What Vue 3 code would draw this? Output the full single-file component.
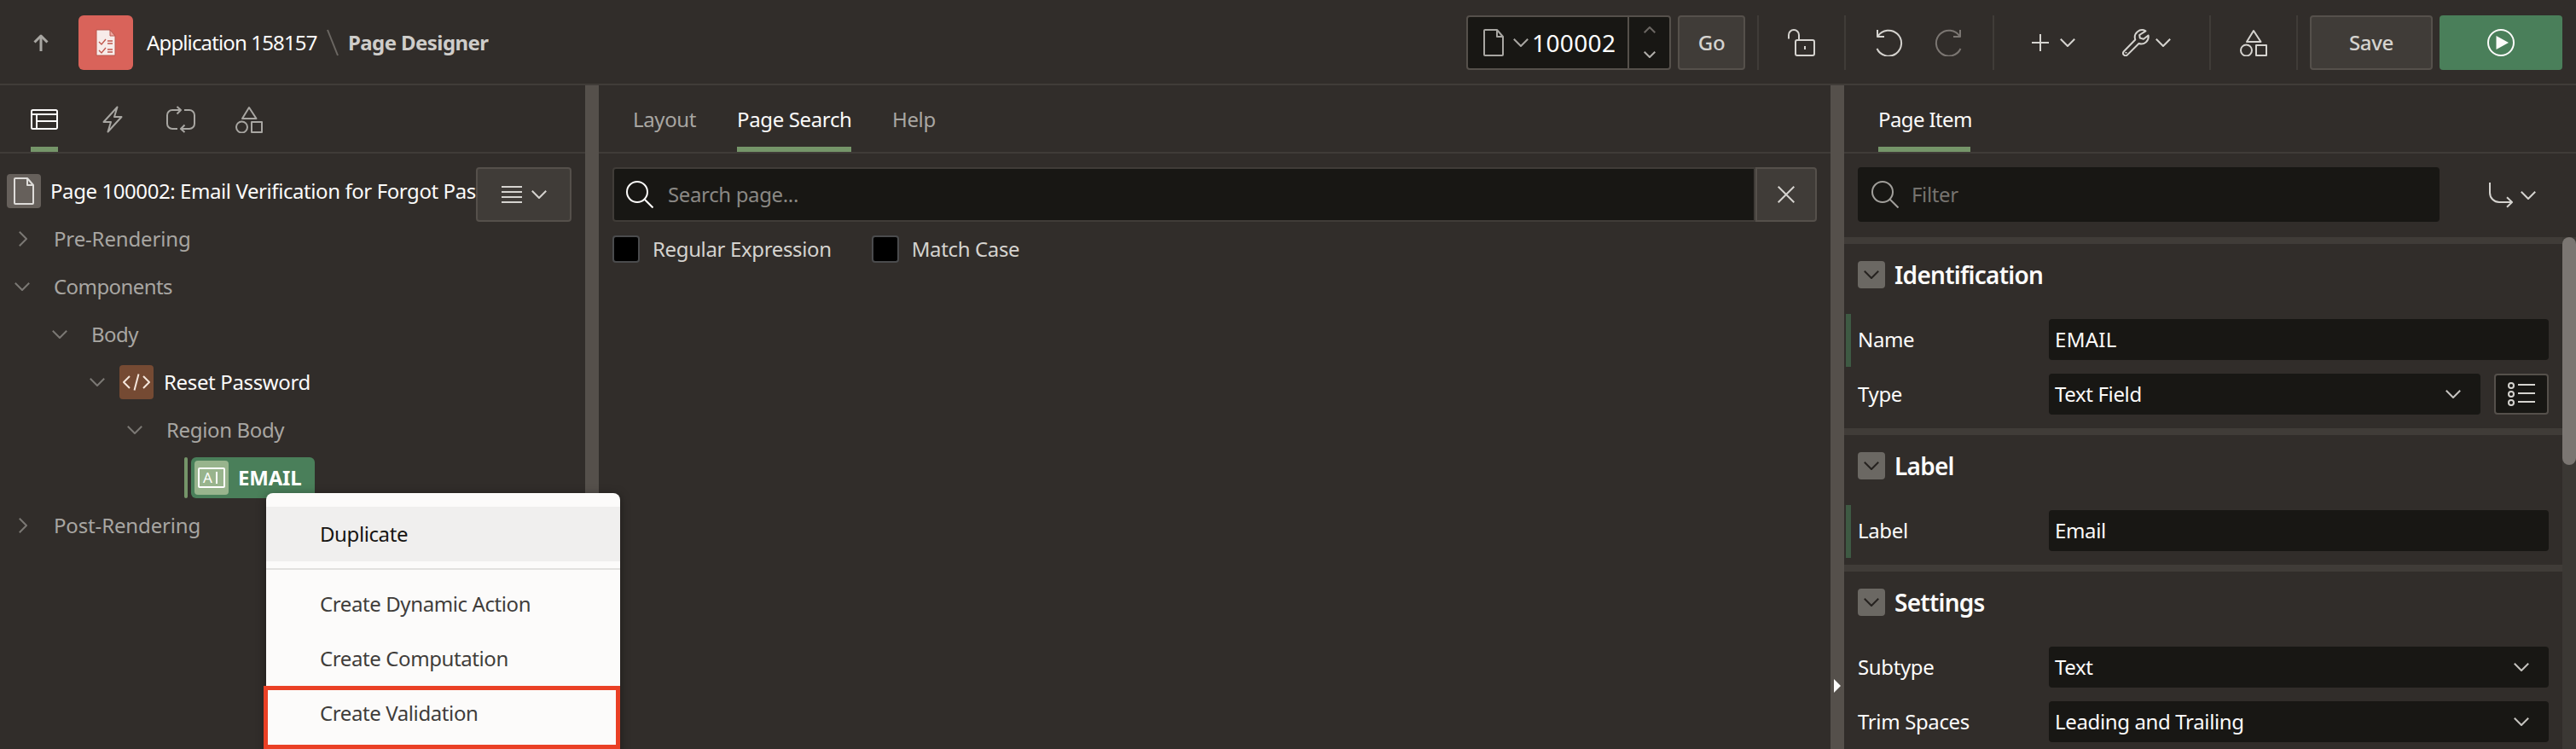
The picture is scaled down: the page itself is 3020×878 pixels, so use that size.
<script setup>
import { h } from 'vue'

const shapes = {
  up: { w: 18, h: 20, d: ['M9 20V2', 'M1.5 9.5 9 2l7.5 7.5'], sw: 3 },
  down: { w: 18, h: 10, d: ['M.8.8 9 9 17.2.8'], sw: 2 },
  upSmall: { w: 14, h: 8, d: ['M.7 7.3 7 1l6.3 6.3'], sw: 2 },
  downSmall: { w: 14, h: 8, d: ['M.7.7 7 7 13.3.7'], sw: 2 },
  right: { w: 10, h: 18, d: ['M.8.8 9 9 .8 17.2'], sw: 2 },
  panel: { w: 32, h: 24, d: ['M2.5 1h27a1.5 1.5 0 0 1 1.5 1.5v19a1.5 1.5 0 0 1-1.5 1.5h-27a1.5 1.5 0 0 1-1.5-1.5v-19a1.5 1.5 0 0 1 1.5-1.5z', 'M1 6h30M7 6v17M7 14h24'], sw: 2 },
  bolt: { w: 24, h: 32, d: ['M17.5 1.5 1.5 19h8.5L6.5 30.5 22.5 13H14z'], sw: 2 },
  cycle: { w: 34, h: 32, d: ['M13 27H7a6 6 0 0 1-6-6V11a6 6 0 0 1 6-6h10', 'M12.5 1 17 5l-4.5 4.5', 'M21 5h6a6 6 0 0 1 6 6v10a6 6 0 0 1-6 6H17', 'M21.5 22.5 17 27l4.5 4'], sw: 2 },
  shapes: { w: 32, h: 32, d: ['M16 2 24.5 15H8z', 'M1 25a6.5 6.5 0 1 0 13 0a6.5 6.5 0 1 0-13 0', 'M19 19h12v12H19z'], sw: 2 },
  page: { w: 24, h: 32, d: ['M2.5 1H16l7 8v21a1 1 0 0 1-1 1H2a1 1 0 0 1-1-1V2a1 1 0 0 1 1-1z', 'M16 1v8h7'], sw: 2 },
  menu: { w: 24, h: 20, d: ['M0 1h24M0 7h24M0 13h24M0 19h24'], sw: 2 },
  search: { w: 32, h: 32, d: ['M1 13a12 12 0 1 0 24 0a12 12 0 1 0-24 0', 'M21.5 21.5 31.5 31.5'], sw: 2 },
  close: { w: 20, h: 20, d: ['M.7.7 19.3 19.3M19.3.7.7 19.3'], sw: 2 },
  lock: { w: 32, h: 32, d: ['M1 11.5V7a6 6 0 0 1 12 0v6', 'M11 13h18a2 2 0 0 1 2 2v14a2 2 0 0 1-2 2H11a2 2 0 0 1-2-2V15a2 2 0 0 1 2-2z', 'M20 20v4'], sw: 2 },
  undo: { w: 32, h: 32, d: ['M2 1v8h8', 'M2.5 8.5A15 15 0 1 1 1.5 23'], sw: 2 },
  redo: { w: 32, h: 32, d: ['M30 1v8h-8', 'M29.5 8.5A15 15 0 1 0 30.5 23'], sw: 2 },
  plus: { w: 20, h: 20, d: ['M10 0v20M0 10h20'], sw: 2 },
  wrench: { w: 32, h: 32, d: ['M27.5 2.3A8.5 8.5 0 0 0 15.3 12.5L1.9 26.3a2.9 2.9 0 0 0 4.1 4.1L19.5 17A8.5 8.5 0 0 0 30.6 7.5L25 11.8l-4.2-1.2-.6-3.6z', 'M4.5 27v1.5'], sw: 2 },
  code: { w: 32, h: 20, d: ['M8 3 1 10l7 7', 'M24 3l7 7-7 7', 'M18.5.5 13.5 19.5'], sw: 2 },
  turn: { w: 28, h: 30, d: ['M1 0v12a11 11 0 0 0 11 11h15', 'M21 17.2 27 23l-6 5.8'], sw: 2 },
  list: { w: 32, h: 28, d: ['M1 4a3 3 0 1 0 6 0a3 3 0 1 0-6 0', 'M1 14a3 3 0 1 0 6 0a3 3 0 1 0-6 0', 'M1 24a3 3 0 1 0 6 0a3 3 0 1 0-6 0', 'M12 3h20M12 13h20M12 23h20'], sw: 2 },
  slash: { w: 14, h: 32, d: ['M1 1 13 31'], sw: 2 },
}
const Icon = (props) => {
  const s = shapes[props.name]
  return h('svg', { width: s.w, height: s.h, viewBox: `0 0 ${s.w} ${s.h}`, fill: 'none', stroke: 'currentColor', 'stroke-width': s.sw, 'stroke-linejoin': 'round' }, s.d.map((d) => h('path', { d })))
}
Icon.props = ['name']

const groups = [
  { title: 'Identification', rows: [{ label: 'Name', value: 'EMAIL', marked: true, wide: true }, { label: 'Type', value: 'Text Field', select: true, list: true }] },
  { title: 'Label', rows: [{ label: 'Label', value: 'Email', marked: true }] },
  { title: 'Settings', rows: [{ label: 'Subtype', value: 'Text', select: true }, { label: 'Trim Spaces', value: 'Leading and Trailing', select: true }] },
]
</script>

<template>
  <div class="app">
    <header class="top">
      <Icon name="up" class="up" />
      <span class="logo">
        <svg width="24" height="32" viewBox="0 0 24 32" fill="none"><path d="M1 1h16l6 7v23H1z" fill="#f7ebe9" stroke="#b9564d" stroke-width="1" /><path d="M17 1v7h6z" fill="#f0a79f" stroke="#b9564d" /><path d="M4 15l3 3 5-6M14 14h6M14 17h6M4 25l3 3 5-6M14 24h6M14 27h6" stroke="#c0564c" stroke-width="1.3" /></svg>
      </span>
      <span class="crumb">Application 158157</span>
      <Icon name="slash" class="slash" />
      <b class="here">Page Designer</b>
      <span class="grow"></span>
      <div class="picker">
        <span class="pick"><Icon name="page" /><Icon name="down" /></span>
        <span class="num">100002</span>
        <span class="spin"><Icon name="upSmall" class="dim" /><Icon name="downSmall" /></span>
      </div>
      <button class="btn go">Go</button>
      <i class="sep s1"></i>
      <Icon name="lock" class="lock" />
      <i class="sep s2"></i>
      <Icon name="undo" class="undo" />
      <Icon name="redo" class="redo" />
      <i class="sep s3"></i>
      <Icon name="plus" class="plus" /><Icon name="down" class="c1" />
      <Icon name="wrench" class="wrench" /><Icon name="down" class="c2" />
      <i class="sep s4"></i>
      <Icon name="shapes" class="shp" />
      <i class="sep s5"></i>
      <button class="btn save">Save</button>
      <button class="run"><svg width="32" height="32" viewBox="0 0 32 32" fill="none"><circle cx="16" cy="16" r="15" stroke="#fcfbfa" stroke-width="2" /><path d="M10.5 8v16L25 16z" fill="#fcfbfa" /></svg></button>
    </header>

    <main class="body">
      <section class="left">
        <nav class="tabs ltabs">
          <span class="tab on"><Icon name="panel" /></span>
          <span class="tab"><Icon name="bolt" /></span>
          <span class="tab"><Icon name="cycle" /></span>
          <span class="tab"><Icon name="shapes" /></span>
        </nav>
        <div class="tree">
          <div class="row root"><span class="tile pg"><Icon name="page" /></span><span class="name">Page 100002: Email Verification for Forgot Pas</span></div>
          <div class="row l0 wider"><Icon name="right" class="tw r" />Pre-Rendering</div>
          <div class="row l0 tight"><Icon name="down" class="tw" />Components</div>
          <div class="row l1 tight"><Icon name="down" class="tw" />Body</div>
          <div class="row l2"><Icon name="down" class="tw" /><span class="tile code"><Icon name="code" /></span><span class="white">Reset Password</span></div>
          <div class="row l3"><Icon name="down" class="tw" />Region Body</div>
          <div class="row l4"><i class="mark"></i><span class="pill"><span class="tile field"><span class="ai">A<i></i></span></span><b>EMAIL</b></span></div>
          <div class="row l0 wider"><Icon name="right" class="tw r" />Post-Rendering</div>
          <button class="btn treebtn"><Icon name="menu" /><Icon name="down" /></button>
        </div>
      </section>
      <i class="bar"></i>
      <section class="mid">
        <nav class="tabs mtabs"><span class="tab t1">Layout</span><span class="tab on t2">Page Search</span><span class="tab">Help</span></nav>
        <div class="find"><span class="box"><Icon name="search" />Search page...</span><button class="btn x"><Icon name="close" /></button></div>
        <div class="checks"><label><i></i>Regular Expression</label><label><i></i>Match Case</label></div>
      </section>
      <i class="bar"><i class="tri"></i></i>
      <section class="right">
        <nav class="tabs rtabs"><span class="tab on t3">Page Item</span></nav>
        <div class="filter"><span class="fbox"><Icon name="search" />Filter</span><Icon name="turn" class="turn" /><Icon name="down" class="fd" /></div>
        <div class="scroll">
          <div class="groups">
            <div v-for="g in groups" :key="g.title" class="group">
              <h2><span class="tog"><Icon name="down" /></span>{{ g.title }}</h2>
              <div v-for="r in g.rows" :key="r.label" class="prop" :class="{ marked: r.marked }">
                <span class="lab">{{ r.label }}</span>
                <span class="val" :class="{ caps: r.wide }">{{ r.value }}<Icon v-if="r.select" name="down" /></span>
                <button v-if="r.list" class="lbtn"><Icon name="list" /></button>
              </div>
            </div>
          </div>
          <div class="track"><i></i></div>
        </div>
      </section>
    </main>

    <div class="ctx">
      <div class="it hov">Duplicate</div>
      <hr />
      <div class="it">Create Dynamic Action</div>
      <div class="it">Create Computation</div>
      <div class="it">Create Validation</div>
      <i class="hl"></i>
    </div>
  </div>
</template>

<style>
body { background: #312d2a; }
</style>

<style scoped>
* { box-sizing: border-box; }
svg { display: block; flex: none; }
.app { position: relative; width: 3020px; height: 878px; overflow: hidden; background: #312d2a; color: #a8a6a2; font: 24px/32px "Noto Sans", "Open Sans", sans-serif; letter-spacing: -.36px; white-space: nowrap; }
button { font: inherit; letter-spacing: inherit; padding: 0; margin: 0; }
.top { height: 100px; border-bottom: 2px solid #403c38; display: flex; align-items: center; padding: 2px 16px 0 39px; color: #d5d3cf; }
.up { color: #a8a6a2; }
.logo { width: 64px; height: 64px; margin-left: 35px; background: #d9635a; border-radius: 6px; display: grid; place-items: center; }
.crumb { color: #fcfbfa; width: 212px; margin-left: 16px; letter-spacing: -.86px; }
.slash { color: #6b6763; margin-left: -1px; }
.here { margin-left: 11px; color: #cfcdca; letter-spacing: -.58px; }
.grow { flex: 1; }
.picker { width: 240px; height: 64px; background: #181714; border: 2px solid #55504b; border-radius: 4px; display: flex; margin-right: 8px; }
.pick { display: flex; align-items: center; gap: 11px; padding-left: 18px; color: #a8a6a2; }
.num { flex: 1; font-size: 28px; line-height: 60px; color: #fff; padding-left: 4px; letter-spacing: .38px; }
.spin { width: 49px; border-left: 2px solid #55504b; display: flex; flex-direction: column; align-items: center; justify-content: space-between; padding: 11px 0 12px; color: #b0aeaa; }
.dim { color: #6b6763; }
.btn { border: 2px solid #55504b; background: #403c38; border-radius: 4px; color: #d5d3cf; display: flex; align-items: center; justify-content: center; height: 64px; }
.go { width: 79px; font-weight: 500; }
.save { width: 144px; font-weight: 500; margin-left: 14px; }
.run { width: 144px; height: 64px; margin-left: 8px; border: 0; background: #4a7f5a; border-radius: 4px; display: grid; place-items: center; }
.sep { width: 2px; height: 64px; background: #403c38; }
.s1 { margin-left: 14px; } .s2 { margin-left: 34px; } .s3 { margin-left: 36px; } .s4 { margin-left: 45px; } .s5 { margin-left: 34px; }
.lock { margin-left: 34px; } .undo { margin-left: 35px; } .redo { margin-left: 37px; color: #7b7672; }
.plus { margin-left: 44px; } .c1 { margin-left: 13px; } .wrench { margin-left: 55px; } .c2 { margin-left: 7px; } .shp { margin-left: 34px; }
.body { display: flex; height: 778px; }
.bar { width: 16px; background: #55504b; flex: none; position: relative; }
.tri { position: absolute; left: 4px; top: 696px; border-left: 8px solid #fcfbfa; border-top: 8px solid transparent; border-bottom: 8px solid transparent; }
.left { width: 686px; flex: none; }
.mid { width: 1444px; flex: none; }
.right { flex: 1; min-width: 0; }
.tabs { height: 80px; border-bottom: 2px solid #403c38; display: flex; }
.tab { height: 78px; display: flex; align-items: center; border-bottom: 6px solid transparent; padding-top: 8px; }
.on { border-color: #759569; color: #fcfbfa; }
.ltabs { padding-left: 36px; gap: 52px; }
.ltabs .tab:nth-child(3) { margin: 0 -5px 0 -1px; }
.mtabs { padding-left: 40px; gap: 48px; }
.t1 { width: 74px; } .t2 { width: 134px; } .t3 { width: 108px; letter-spacing: -.6px; }
.rtabs { padding-left: 40px; }
.tree { position: relative; padding-top: 16px; }
.row { height: 56px; display: flex; align-items: center; }
.wider { letter-spacing: -.15px; }
.tight { letter-spacing: -.58px; }
.tile { width: 40px; height: 40px; border-radius: 4px; display: grid; place-items: center; flex: none; }
.root { padding-left: 8px; color: #fcfbfa; }
.pg { background: #66605b; color: #dedcd9; }
.name { margin-left: 11px; letter-spacing: -.42px; }
.tw { color: #7b7874; margin-right: 28px; }
.r { margin-left: 5px; margin-right: 31px; }
.l0 { padding-left: 17px; } .l1 { padding-left: 61px; } .l2 { padding-left: 105px; } .l3 { padding-left: 149px; } .l4 { padding-left: 216px; }
.l2 .tw { margin-right: 17px; }
.code { background: #754a33; color: #f5e6dc; margin-right: 12px; }
.white { color: #fcfbfa; }
.mark { width: 4px; height: 48px; background: #759569; border-radius: 2px; }
.pill { margin-left: 4px; width: 145px; height: 48px; border-radius: 6px; background: #4a7f5a; color: #fff; display: flex; align-items: center; padding-left: 4px; }
.pill b { margin-left: 11px; letter-spacing: -.2px; }
.field { background: #98b48d; }
.ai { width: 32px; height: 24px; border: 2px solid #fff; border-radius: 2px; color: #fff; font: 17px/20px "Noto Sans", sans-serif; display: flex; padding-left: 4px; }
.ai i { width: 2px; height: 14px; background: #fff; margin: 3px 0 0 4px; }
.treebtn { position: absolute; left: 558px; top: 16px; width: 112px; gap: 11px; }
.find { display: flex; margin: 16px 16px 0; }
.box { width: 1340px; height: 64px; background: #181714; border: 2px solid #403c38; border-radius: 4px 0 0 4px; display: flex; align-items: center; gap: 17px; padding-left: 14px; color: #8a8884; }
.box svg { color: #fcfbfa; }
.x { width: 72px; border-radius: 0 4px 4px 0; }
.checks { display: flex; margin: 16px; gap: 47px; color: #d5d3cf; }
.checks label { display: flex; gap: 15px; }
.checks i { width: 32px; height: 32px; background: #000; border: 2px solid #4a4b4d; border-radius: 4px; }
.filter { height: 98px; padding: 16px 0 0 16px; display: flex; }
.fbox { width: 682px; height: 64px; border-radius: 4px; background: #181714; display: flex; align-items: center; gap: 15px; padding-left: 16px; color: #76736f; }
.fbox svg { color: #a19f9b; }
.turn { margin: 18px 0 0 58px; color: #d5d3cf; }
.fd { margin: 28px 0 0 9px; color: #d5d3cf; }
.scroll { display: flex; height: 600px; }
.groups { width: 842px; }
.group { border-top: 8px solid #403c38; padding: 20px 16px 6px; }
h2 { margin: 0 0 30px; height: 32px; font-size: 28px; font-weight: 600; letter-spacing: -.75px; color: #fcfbfa; display: flex; align-items: center; gap: 11px; }
.tog { width: 32px; height: 32px; background: #6b6863; border-radius: 4px; display: grid; place-items: center; color: #25221f; }
.prop { height: 64px; display: flex; align-items: flex-start; padding-top: 6px; line-height: 48px; color: #fcfbfa; position: relative; }
.marked::before { content: ""; position: absolute; left: -14px; top: 0; width: 6px; height: 62px; background: #3e5a43; }
.lab { width: 224px; }
.val { flex: 1; height: 48px; background: #181714; border-radius: 4px; display: flex; align-items: center; justify-content: space-between; padding: 0 23px 0 7px; }
.val.caps { letter-spacing: .3px; }
.val svg { color: #c5c3bf; }
.lbtn { width: 64px; height: 48px; margin-left: 16px; border: 2px solid #55504b; border-radius: 4px; background: #181714; color: #d5d3cf; display: grid; place-items: center; }
.track { width: 16px; background: #3b3834; }
.track i { display: block; height: 267px; border-radius: 8px; background: #7b7672; }
.ctx { position: absolute; left: 312px; top: 578px; width: 415px; height: 320px; background: #fcfbfa; border-radius: 8px 8px 0 0; padding-top: 16px; color: #403d3a; letter-spacing: -.4px; box-shadow: 0 2px 12px rgba(0, 0, 0, .4); }
.it { height: 64px; line-height: 64px; padding-left: 63px; }
.hov { background: #f0efee; color: #161513; }
hr { margin: 8px 0; height: 2px; border: 0; background: #e2e1df; }
.hl { position: absolute; left: -3px; top: 226px; width: 418px; height: 74px; border: 5px solid #ea4025; }
</style>
